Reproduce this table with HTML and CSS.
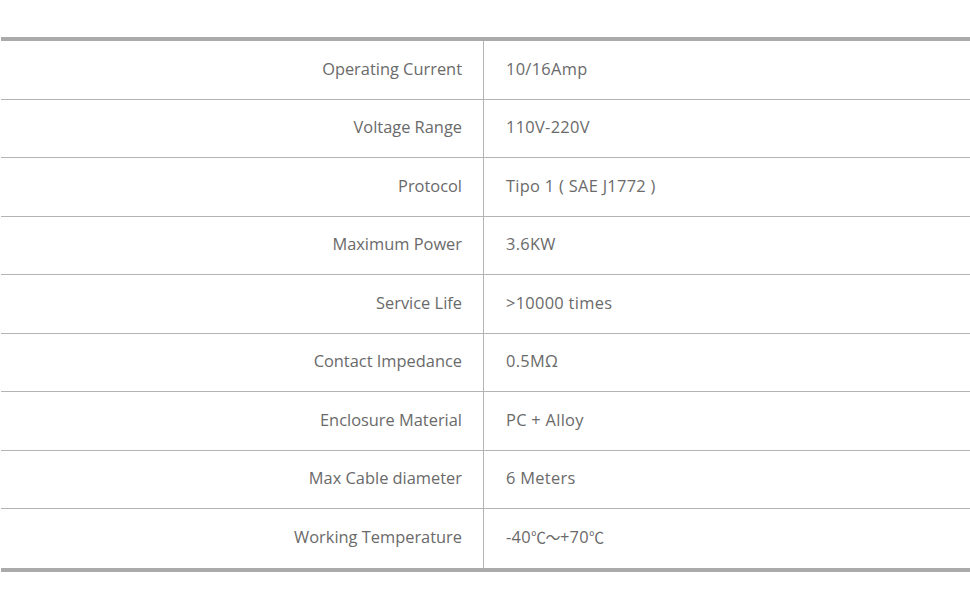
FILE: index.html
```html
<!DOCTYPE html>
<html>
<head>
<meta charset="utf-8">
<link rel="stylesheet" href="styles.css">
</head>
<body>
<div class="page">
  <div class="spec">
    <div class="row"><div class="key">Operating Current</div><div class="val">10/16Amp</div></div>
    <div class="row"><div class="key">Voltage Range</div><div class="val">110V-220V</div></div>
    <div class="row"><div class="key">Protocol</div><div class="val">Tipo 1 ( SAE J1772 )</div></div>
    <div class="row"><div class="key">Maximum Power</div><div class="val">3.6KW</div></div>
    <div class="row"><div class="key">Service Life</div><div class="val">&gt;10000 times</div></div>
    <div class="row"><div class="key">Contact Impedance</div><div class="val">0.5MΩ</div></div>
    <div class="row"><div class="key">Enclosure Material</div><div class="val">PC + Alloy</div></div>
    <div class="row"><div class="key">Max Cable diameter</div><div class="val">6 Meters</div></div>
    <div class="row"><div class="key">Working Temperature</div><div class="val">-40<span class="cjk">℃～</span>+70<span class="cjk">℃</span></div></div>
  </div>
</div>
</body>
</html>
```
FILE: styles.css
```css
html, body {
  margin: 0;
  padding: 0;
  background: #fff;
}
.page {
  padding: 37px 0 0 1px;
}
.spec {
  width: 969px;
  border-top: 4px solid #aaaaaa;
  border-bottom: 4px solid #aaaaaa;
  font-family: "Open Sans", sans-serif;
  font-size: 16.4px;
  color: #6a6a6a;
}
.row {
  display: grid;
  grid-template-columns: 483px 1fr;
  height: 57.5px;
  border-bottom: 1px solid #b4b4b4;
}
.row:last-child {
  border-bottom: none;
  height: 58.5px;
}
.key {
  border-right: 1px solid #b4b4b4;
  display: flex;
  align-items: center;
  justify-content: flex-end;
  padding-right: 21px;
  padding-bottom: 3.5px;
}
.val {
  display: flex;
  align-items: center;
  padding-left: 22px;
  padding-bottom: 3.5px;
  letter-spacing: 0.3px;
}
.cjk {
  font-family: "Noto Sans CJK SC", sans-serif;
  font-size: 15px;
  letter-spacing: -0.5px;
}
```
